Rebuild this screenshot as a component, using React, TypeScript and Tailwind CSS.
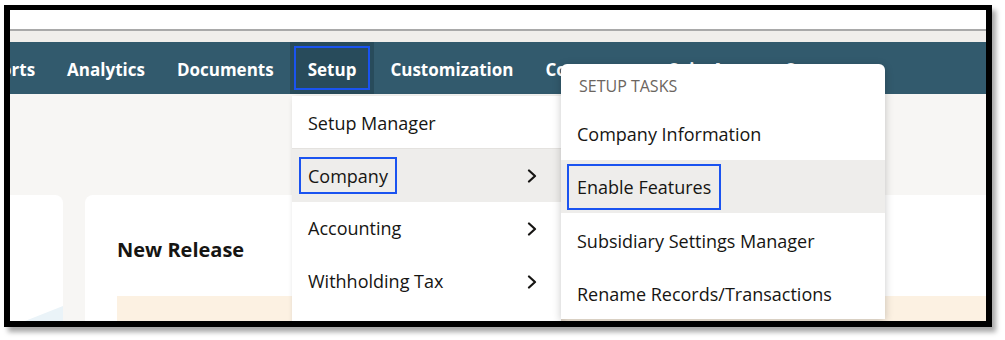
import { ReactNode } from 'react';

const navItems = ['Reports', 'Analytics', 'Documents', 'Setup', 'Customization', 'Commerce', 'SuiteApps', 'Support'];

function Chevron() {
  return (
    <svg width="10" height="14" viewBox="0 0 10 14" fill="none">
      <path d="M2 1.5 L8 7 L2 12.5" stroke="#161513" strokeWidth="2.2" strokeLinecap="round" strokeLinejoin="round" />
    </svg>
  );
}

function MenuRow({ children, active, arrow, border }: { children?: ReactNode; active?: boolean; arrow?: boolean; border?: boolean }) {
  return (
    <div
      className={`flex h-[53px] items-center justify-between pr-[24px] ${active ? 'bg-[#eeedeb]' : 'bg-white'} ${
        border ? 'border-b border-[#e4e2df]' : ''
      }`}
    >
      {children}
      {arrow && <Chevron />}
    </div>
  );
}

function App() {
  return (
    <div className="h-[340px] w-[1005px] overflow-hidden bg-white font-['Open_Sans',sans-serif] text-[#161513]">
      {/* framed screenshot */}
      <div className="ml-[4px] mt-[5px] h-[322px] w-[988px] border-[6px] border-t-[5px] border-black shadow-[4px_5px_5px_rgba(0,0,0,0.35)]">
        <div className="relative flex h-full w-full flex-col overflow-hidden bg-[#f7f6f4]">
          <div className="h-[19px] shrink-0 bg-white" />
          <div className="h-[2px] shrink-0 bg-[#a9a9a9]" />
          <div className="h-[11px] shrink-0 bg-[#f0eeeb]" />

          {/* nav bar */}
          <div className="flex h-[52px] shrink-0 items-center bg-[#325a6d] text-[17px] font-bold text-white">
            <div className="-ml-[57px] flex h-full items-center">
              {navItems.map(item =>
                item === 'Setup' ? (
                  <div key={item} className="flex h-full items-center bg-[#284b5b] px-[4px]">
                    <span className="flex h-[44px] items-center border-2 border-[#1a53f0] px-[12px] pt-[3px]">{item}</span>
                  </div>
                ) : (
                  <span key={item} className="px-[16px] pt-[3px]">
                    {item}
                  </span>
                )
              )}
            </div>
          </div>

          {/* page body */}
          <div className="flex flex-1 gap-[22px] pt-[101px]">
            <div className="relative w-[53px] shrink-0 overflow-hidden rounded-tr-[8px] bg-white">
              <svg className="absolute bottom-0 left-0" width="53" height="16" viewBox="0 0 53 16">
                <path d="M15 16 L53 1 L53 16 Z" fill="#eaf3f8" />
              </svg>
            </div>
            <div className="-mr-[20px] flex flex-1 flex-col rounded-tl-[8px] bg-white pl-[32px]">
              <div className="flex h-[101px] items-center pt-[8px] text-[20px] font-bold text-[#161513]">New Release</div>
              <div className="flex-1 bg-[#fcf1e2]" />
            </div>
          </div>

          {/* setup menu */}
          <div className="absolute left-[282px] top-[86px] w-[269px] rounded-tl-[4px] bg-white text-[18px] shadow-[2px_2px_6px_rgba(0,0,0,0.18)]">
            <MenuRow border>
              <span className="pl-[16px] pt-[2px]">Setup Manager</span>
            </MenuRow>
            <MenuRow active arrow>
              <span className="ml-[7px] flex h-[37px] items-center border-2 border-[#1a53f0] px-[7px] pt-[2px]">Company</span>
            </MenuRow>
            <MenuRow arrow>
              <span className="pl-[16px]">Accounting</span>
            </MenuRow>
            <MenuRow arrow>
              <span className="pl-[16px]">Withholding Tax</span>
            </MenuRow>
            <MenuRow />
          </div>

          {/* setup tasks submenu */}
          <div className="absolute left-[551px] top-[54px] w-[324px] rounded-t-[6px] bg-white text-[18px] shadow-[0_2px_8px_rgba(0,0,0,0.22)]">
            <div className="flex h-[44px] items-center pl-[18px] text-[16px] uppercase text-[#6b6560]">Setup Tasks</div>
            <div className="flex h-[52px] items-center pl-[16px]">Company Information</div>
            <MenuRow active>
              <span className="ml-[6px] flex h-[46px] items-center border-2 border-[#1a53f0] px-[8px] pt-[2px]">Enable Features</span>
            </MenuRow>
            <MenuRow>
              <span className="pl-[16px] pt-[4px]">Subsidiary Settings Manager</span>
            </MenuRow>
            <MenuRow>
              <span className="pl-[16px] pt-[4px]">Rename Records/Transactions</span>
            </MenuRow>
          </div>
        </div>
      </div>
    </div>
  );
}

export default App;
